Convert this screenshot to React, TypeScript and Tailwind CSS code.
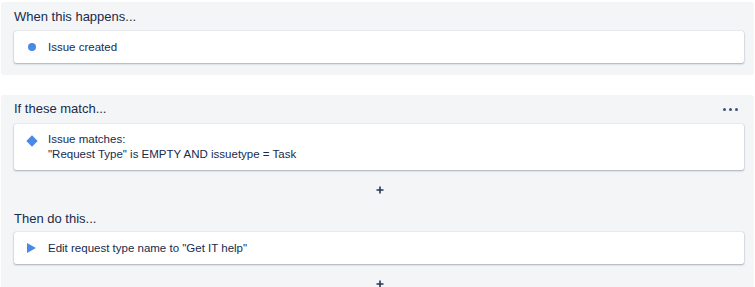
import React from "react";

const Plus = () => (
  <div className="flex h-[16px] items-center justify-center">
    <svg width="8" height="8" viewBox="0 0 8 8" className="ml-[1px]">
      <path d="M4 0.5V7.5M0.5 4H7.5" stroke="#253858" strokeWidth="1.6" />
    </svg>
  </div>
);

const Card = ({ icon, children, tall }: { icon: React.ReactNode; children: React.ReactNode; tall?: boolean }) => (
  <div
    className={`flex bg-white rounded-[2px] shadow-[0_1px_2px_rgba(9,30,66,0.3),0_0_1px_rgba(9,30,66,0.35)] pl-[13px] ${
      tall ? "items-start py-[8px]" : "items-center h-[32px]"
    }`}
  >
    <div className={`w-[9px] flex items-center justify-center ${tall ? "h-[15px] mt-[1px]" : ""}`}>{icon}</div>
    <div className="ml-[12px] text-[11.5px] leading-[15px] text-[#172b4d]">{children}</div>
  </div>
);

export default function App() {
  return (
    <div
      className="w-[755px] h-[287px] overflow-hidden bg-white"
      style={{ fontFamily: '"Liberation Sans", Arial, sans-serif' }}
    >
      <div className="mx-[1px] mt-[2px] rounded-[3px] bg-[#f4f5f7] pl-[13px] pr-[10px] pt-[5px] pb-[12px]">
        <div className="text-[13px] leading-[20px] text-[#172b4d]">When this happens...</div>
        <div className="mt-[4px]">
          <Card icon={<div className="w-[8px] h-[8px] rounded-full bg-[#4a89e8]" />}>Issue created</Card>
        </div>
      </div>

      <div className="mx-[1px] mt-[20px] h-[200px] rounded-[3px] bg-[#f4f5f7] pl-[13px] pr-[10px] pt-[4px]">
        <div className="flex items-center justify-between">
          <div className="text-[13px] leading-[20px] text-[#172b4d]">If these match...</div>
          <div className="mr-[6px] flex gap-[3px]">
            <div className="w-[3px] h-[3px] rounded-full bg-[#42526e]" />
            <div className="w-[3px] h-[3px] rounded-full bg-[#42526e]" />
            <div className="w-[3px] h-[3px] rounded-full bg-[#42526e]" />
          </div>
        </div>
        <div className="mt-[5px]">
          <Card tall icon={<div className="w-[8px] h-[8px] rotate-45 bg-[#4a89e8]" />}>
            <div>Issue matches:</div>
            <div>"Request Type" is EMPTY AND issuetype = Task</div>
          </Card>
        </div>
        <div className="mt-[12px]">
          <Plus />
        </div>
        <div className="mt-[11px] text-[13px] leading-[20px] text-[#172b4d]">Then do this...</div>
        <div className="mt-[3px]">
          <Card
            icon={
              <svg width="9" height="10" viewBox="0 0 9 10">
                <path d="M0 0L9 5L0 10Z" fill="#4a89e8" />
              </svg>
            }
          >
            Edit request type name to "Get IT help"
          </Card>
        </div>
        <div className="mt-[12px]">
          <Plus />
        </div>
      </div>
    </div>
  );
}
